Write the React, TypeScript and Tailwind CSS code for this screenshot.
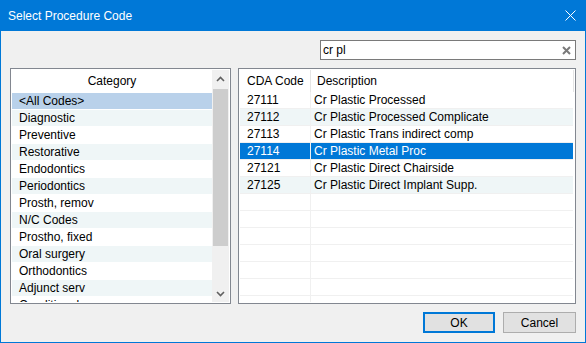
const categories = [
  "<All Codes>",
  "Diagnostic",
  "Preventive",
  "Restorative",
  "Endodontics",
  "Periodontics",
  "Prosth, remov",
  "N/C Codes",
  "Prostho, fixed",
  "Oral surgery",
  "Orthodontics",
  "Adjunct serv",
  "Conditional",
];

const codes: [string, string][] = [
  ["27111", "Cr Plastic Processed"],
  ["27112", "Cr Plastic Processed Complicate"],
  ["27113", "Cr Plastic Trans indirect comp"],
  ["27114", "Cr Plastic Metal Proc"],
  ["27121", "Cr Plastic Direct Chairside"],
  ["27125", "Cr Plastic Direct Implant Supp."],
  ["", ""],
  ["", ""],
  ["", ""],
  ["", ""],
  ["", ""],
  ["", ""],
  ["", ""],
];

const SELECTED = 3;

function Chevron({ up }: { up?: boolean }) {
  return (
    <svg width="9" height="6" viewBox="0 0 9 6">
      <polyline
        points={up ? "1,5 4.5,1.5 8,5" : "1,1 4.5,4.5 8,1"}
        fill="none"
        stroke="#606060"
        strokeWidth="1.6"
      />
    </svg>
  );
}

export default function App() {
  return (
    <div
      className="w-[586px] h-[343px] flex flex-col bg-[#f0f0f0] text-[12px] text-black overflow-hidden"
      style={{ fontFamily: '"Liberation Sans", Arial, sans-serif' }}
    >
      {/* title bar */}
      <div className="h-[31px] shrink-0 bg-[#0078d7] flex items-center justify-between pl-[8px] pr-[10px] text-white">
        <span className="text-[12px] leading-none">Select Procedure Code</span>
        <svg width="11" height="11" viewBox="0 0 11 11">
          <path d="M0.5 0.5 L10.5 10.5 M10.5 0.5 L0.5 10.5" stroke="#fff" strokeWidth="1" />
        </svg>
      </div>

      <div className="flex-1 flex flex-col border-x border-b border-[#0078d7] px-[9px] pt-[9px]">
        {/* search */}
        <div className="flex justify-end">
          <div className="w-[256px] h-[20px] bg-white border border-[#7a7a7a] flex items-center justify-between pl-[2px] pr-[4px]">
            <span className="text-[12px] leading-none">cr pl</span>
            <svg width="9" height="9" viewBox="0 0 9 9">
              <path d="M1 1 L8 8 M8 1 L1 8" stroke="#7a7a7a" strokeWidth="2" />
            </svg>
          </div>
        </div>

        {/* panels */}
        <div className="mt-[8px] h-[236px] flex gap-[7px]">
          {/* category list */}
          <div className="w-[221px] h-full bg-white border border-[#828790] flex p-px overflow-hidden">
            <div className="flex-1 flex flex-col overflow-hidden">
              <div className="h-[22px] shrink-0 flex items-center justify-center">Category</div>
              {categories.map((c, i) => (
                <div
                  key={c}
                  className={`h-[17px] shrink-0 flex items-center pl-[7px] border-t border-white ${
                    i === 0 ? "bg-[#b9d1ea]" : i % 2 === 1 ? "bg-[#eff6f7]" : "bg-white"
                  }`}
                >
                  {c}
                </div>
              ))}
            </div>
            <div className="w-[17px] shrink-0 bg-[#f0f0f0] flex flex-col items-center">
              <div className="h-[17px] flex items-center justify-center">
                <Chevron up />
              </div>
              <div className="w-[15px] h-[157px] mt-[2px] bg-[#cdcdcd]" />
              <div className="flex-1" />
              <div className="h-[17px] flex items-center justify-center">
                <Chevron />
              </div>
            </div>
          </div>

          {/* code list */}
          <div className="flex-1 h-full bg-white border border-[#828790] flex p-px overflow-hidden">
            <div className="flex-1 flex flex-col overflow-hidden">
              <div className="h-[22px] shrink-0 flex items-center">
                <div className="w-[71px] h-full flex items-center pl-[7px] border-r border-[#e5e5e5]">CDA Code</div>
                <div className="pl-[6px]">Description</div>
              </div>
              {codes.map(([code, desc], i) => (
                <div
                  key={i}
                  className={`h-[17px] shrink-0 flex items-center border-b border-[#f0f0f0] ${
                    i === SELECTED
                      ? "bg-[#0078d7] text-white"
                      : i % 2 === 1 && code
                      ? "bg-[#eff6f7]"
                      : "bg-white"
                  }`}
                >
                  <div className="w-[71px] h-full flex items-center pl-[7px] border-r border-[#f0f0f0]">{code}</div>
                  <div className="pl-[3px]">{desc}</div>
                </div>
              ))}
            </div>
            <div className="w-px shrink-0 flex flex-col">
              <div className="h-[22px] bg-[#e5e5e5]" />
            </div>
          </div>
        </div>

        {/* buttons */}
        <div className="mt-[8px] flex justify-end gap-[8px]">
          <button className="w-[72px] h-[21px] bg-[#e1e1e1] border-2 border-[#0078d7] flex items-center justify-center text-[12px]">
            OK
          </button>
          <button className="w-[73px] h-[21px] bg-[#e1e1e1] border border-[#adadad] flex items-center justify-center text-[12px]">
            Cancel
          </button>
        </div>
      </div>
    </div>
  );
}
